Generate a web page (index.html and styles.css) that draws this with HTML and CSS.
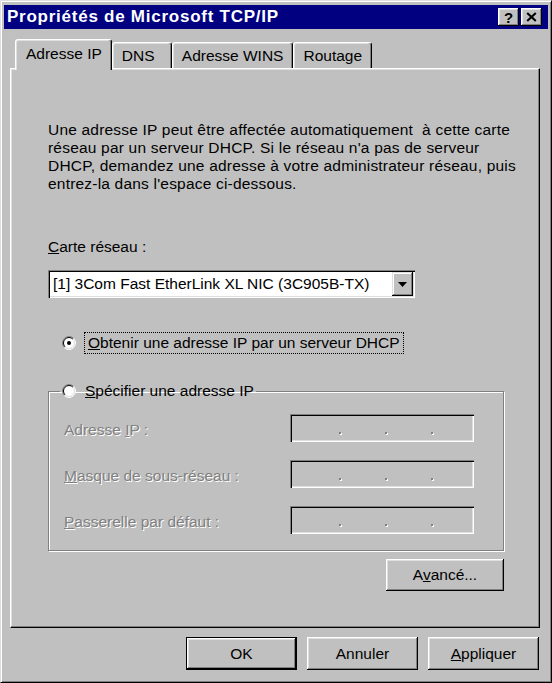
FILE: index.html
```html
<!DOCTYPE html>
<html lang="fr">
<head>
<meta charset="utf-8">
<title>Propriétés de Microsoft TCP/IP</title>
<link rel="stylesheet" href="styles.css">
</head>
<body>
<div class="window">
  <div class="titlebar">
    <span class="title">Propriétés de Microsoft TCP/IP</span>
    <div class="title-buttons">
      <span class="tbtn help">?</span>
      <span class="tbtn close"><svg width="11" height="10" viewBox="0 0 11 10"><path d="M1.2 1 L9.8 9 M9.8 1 L1.2 9" stroke="#000" stroke-width="2.1" fill="none"/></svg></span>
    </div>
  </div>
  <div class="main">
    <div class="tabs">
      <div class="tab active">Adresse IP</div>
      <div class="tab">DNS</div>
      <div class="tab">Adresse WINS</div>
      <div class="tab">Routage</div>
    </div>
    <div class="panel">
      <p class="intro">Une adresse IP peut être affectée automatiquement&nbsp; à cette carte<br>réseau par un serveur DHCP. Si le réseau n'a pas de serveur<br>DHCP, demandez une adresse à votre administrateur réseau, puis<br>entrez-la dans l'espace ci-dessous.</p>
      <div class="label"><u>C</u>arte réseau :</div>
      <div class="select">
        <span class="select-text">[1] 3Com Fast EtherLink XL NIC (3C905B-TX)</span>
        <span class="select-btn"><svg width="9" height="5" viewBox="0 0 9 5"><path d="M0 0H9L4.5 5Z" fill="#000"/></svg></span>
      </div>
      <div class="radio-row">
        <svg class="radio" width="14" height="14" viewBox="0 0 14 14">
          <circle cx="7" cy="7" r="6" fill="#fff"/>
          <path d="M2.4 11.6 A6.5 6.5 0 0 1 11.6 2.4" stroke="#808080" stroke-width="1" fill="none"/>
          <path d="M11.6 2.4 A6.5 6.5 0 0 1 2.4 11.6" stroke="#fff" stroke-width="1" fill="none"/>
          <path d="M3.1 10.9 A5.5 5.5 0 0 1 10.9 3.1" stroke="#000" stroke-width="1" fill="none"/>
          <path d="M10.9 3.1 A5.5 5.5 0 0 1 3.1 10.9" stroke="#dfdfdf" stroke-width="1" fill="none"/>
          <circle cx="7" cy="7" r="2" fill="#000"/>
        </svg>
        <span class="focus"><u>O</u>btenir une adresse IP par un serveur DHCP</span>
      </div>
      <fieldset class="group">
        <legend>
          <svg class="radio" width="14" height="14" viewBox="0 0 14 14">
            <circle cx="7" cy="7" r="6" fill="#fff"/>
            <path d="M2.4 11.6 A6.5 6.5 0 0 1 11.6 2.4" stroke="#808080" stroke-width="1" fill="none"/>
            <path d="M11.6 2.4 A6.5 6.5 0 0 1 2.4 11.6" stroke="#fff" stroke-width="1" fill="none"/>
            <path d="M3.1 10.9 A5.5 5.5 0 0 1 10.9 3.1" stroke="#000" stroke-width="1" fill="none"/>
            <path d="M10.9 3.1 A5.5 5.5 0 0 1 3.1 10.9" stroke="#dfdfdf" stroke-width="1" fill="none"/>
          </svg>
          <span><u>S</u>pécifier une adresse IP</span>
        </legend>
        <div class="field-row">
          <span class="dis">Adresse <u>I</u>P :</span>
          <span class="ipbox"><i></i><i></i><i></i></span>
        </div>
        <div class="field-row">
          <span class="dis"><u>M</u>asque de sous-réseau :</span>
          <span class="ipbox"><i></i><i></i><i></i></span>
        </div>
        <div class="field-row">
          <span class="dis"><u>P</u>asserelle par défaut :</span>
          <span class="ipbox"><i></i><i></i><i></i></span>
        </div>
      </fieldset>
      <div class="adv-row"><button class="btn adv">A<u>v</u>ancé...</button></div>
    </div>
    <div class="dlg-buttons">
      <button class="btn default">OK</button>
      <button class="btn">Annuler</button>
      <button class="btn"><u>A</u>ppliquer</button>
    </div>
  </div>
</div>
</body>
</html>
```

FILE: styles.css
```css
body {
  margin: 0;
  background: #c0c0c0;
  font-family: "Liberation Sans", Arial, sans-serif;
  font-size: 15.5px;
  color: #000;
}

.window {
  box-sizing: border-box;
  width: 552px;
  height: 683px;
  background: #c0c0c0;
  border: 1px solid;
  border-color: #dfdfdf #000 #000 #dfdfdf;
  box-shadow: inset 1px 1px #fff, inset -1px -1px #808080;
  padding: 4px 3px 3px 3px;
  display: flex;
  flex-direction: column;
}

.titlebar {
  height: 24px;
  flex: none;
  background: #000080;
  color: #fff;
  display: flex;
  align-items: center;
  justify-content: space-between;
  padding: 0 6px 0 3px;
}

.title {
  font-weight: bold;
  font-size: 17px;
  letter-spacing: 0.75px;
}

.title-buttons {
  display: flex;
  gap: 2px;
}

.tbtn {
  width: 21px;
  height: 18px;
  background: #c0c0c0;
  box-shadow: inset -1px -1px #000, inset 1px 1px #fff, inset -2px -2px #808080, inset 2px 2px #dfdfdf;
  display: flex;
  align-items: center;
  justify-content: center;
  color: #000;
  font-weight: bold;
  font-size: 15px;
  line-height: 1;
}

.main {
  flex: 1;
  display: flex;
  flex-direction: column;
  padding: 10px 8px 9px 6px;
  min-height: 0;
}

.tabs {
  display: flex;
  align-items: flex-end;
  padding-left: 5px;
  height: 29px;
  flex: none;
  position: relative;
  z-index: 1;
}

.tab {
  box-sizing: border-box;
  height: 26px;
  min-width: 60px;
  padding: 0 9px;
  border: 1px solid;
  border-bottom: none;
  border-color: #fff #000 transparent #fff;
  border-radius: 3px 3px 0 0;
  box-shadow: inset -1px 0 #808080, inset 1px 1px #dfdfdf;
  display: flex;
  align-items: center;
  white-space: nowrap;
  background: #c0c0c0;
}

.tab.active {
  height: 31px;
  margin-bottom: -2px;
  padding-bottom: 2px;
  padding-left: 10px;
}

.panel {
  flex: 1;
  box-sizing: border-box;
  border: 1px solid;
  border-color: #fff #000 #000 #fff;
  box-shadow: inset -1px -1px #808080, inset 1px 1px #dfdfdf;
  padding: 52px 35px 0 37px;
  display: flex;
  flex-direction: column;
}

.intro {
  margin: 0;
  line-height: 18px;
  letter-spacing: 0.2px;
  white-space: nowrap;
}

.label {
  margin-top: 45px;
  line-height: 18px;
}

.select {
  margin-top: 14px;
  width: 367px;
  height: 28px;
  box-sizing: border-box;
  background: #fff;
  box-shadow: inset 1px 1px #808080, inset 2px 2px #000, inset -1px -1px #fff, inset -2px -2px #dfdfdf;
  display: flex;
  align-items: center;
  justify-content: space-between;
  padding: 2px 2px 2px 5px;
}

.select-btn {
  width: 21px;
  height: 24px;
  background: #c0c0c0;
  box-shadow: inset -1px -1px #000, inset 1px 1px #dfdfdf, inset -2px -2px #808080, inset 2px 2px #fff;
  display: flex;
  align-items: center;
  justify-content: center;
}

.radio-row {
  margin-top: 34px;
  display: flex;
  align-items: center;
  padding-left: 14px;
  height: 22px;
}

.radio {
  flex: none;
  display: block;
}

.focus {
  margin-left: 8px;
  border: 1px dotted #000;
  padding: 1px 3px;
  line-height: 18px;
}

.group {
  margin: 28px 0 0 0;
  padding: 14px 29px 16px 15px;
  border: 1px solid #808080;
  box-shadow: inset 1px 1px #fff, 1px 1px #fff;
  min-width: 0;
  display: flex;
  flex-direction: column;
  gap: 18px;
}

.group legend {
  margin-left: -4px;
  padding: 0 2px;
  display: flex;
  align-items: center;
  gap: 9px;
  line-height: 18px;
}

.field-row {
  display: flex;
  align-items: center;
  justify-content: space-between;
}

.dis {
  color: #808080;
  text-shadow: 1px 1px 0 #fff;
  padding-top: 4px;
}

.ipbox {
  width: 184px;
  height: 28px;
  box-sizing: border-box;
  box-shadow: inset 1px 1px #808080, inset 2px 2px #000, inset -1px -1px #fff, inset -2px -2px #dfdfdf;
  display: flex;
  gap: 44px;
  padding: 18px 0 0 49px;
}

.ipbox i {
  width: 2px;
  height: 2px;
  background: #808080;
  box-shadow: 1px 1px #fff;
}

.adv-row {
  margin-top: 8px;
  display: flex;
  justify-content: flex-end;
}

.btn {
  box-sizing: border-box;
  height: 33px;
  width: 111px;
  background: #c0c0c0;
  border: none;
  box-shadow: inset -1px -1px #000, inset 1px 1px #fff, inset -2px -2px #808080, inset 2px 2px #dfdfdf;
  font: inherit;
  color: #000;
  padding: 0;
}

.btn.adv {
  width: 118px;
  height: 32px;
}

.btn.default {
  border: 1px solid #000;
}

.dlg-buttons {
  flex: none;
  margin-top: 9px;
  margin-right: 1px;
  display: flex;
  justify-content: flex-end;
  gap: 10px;
}
```
